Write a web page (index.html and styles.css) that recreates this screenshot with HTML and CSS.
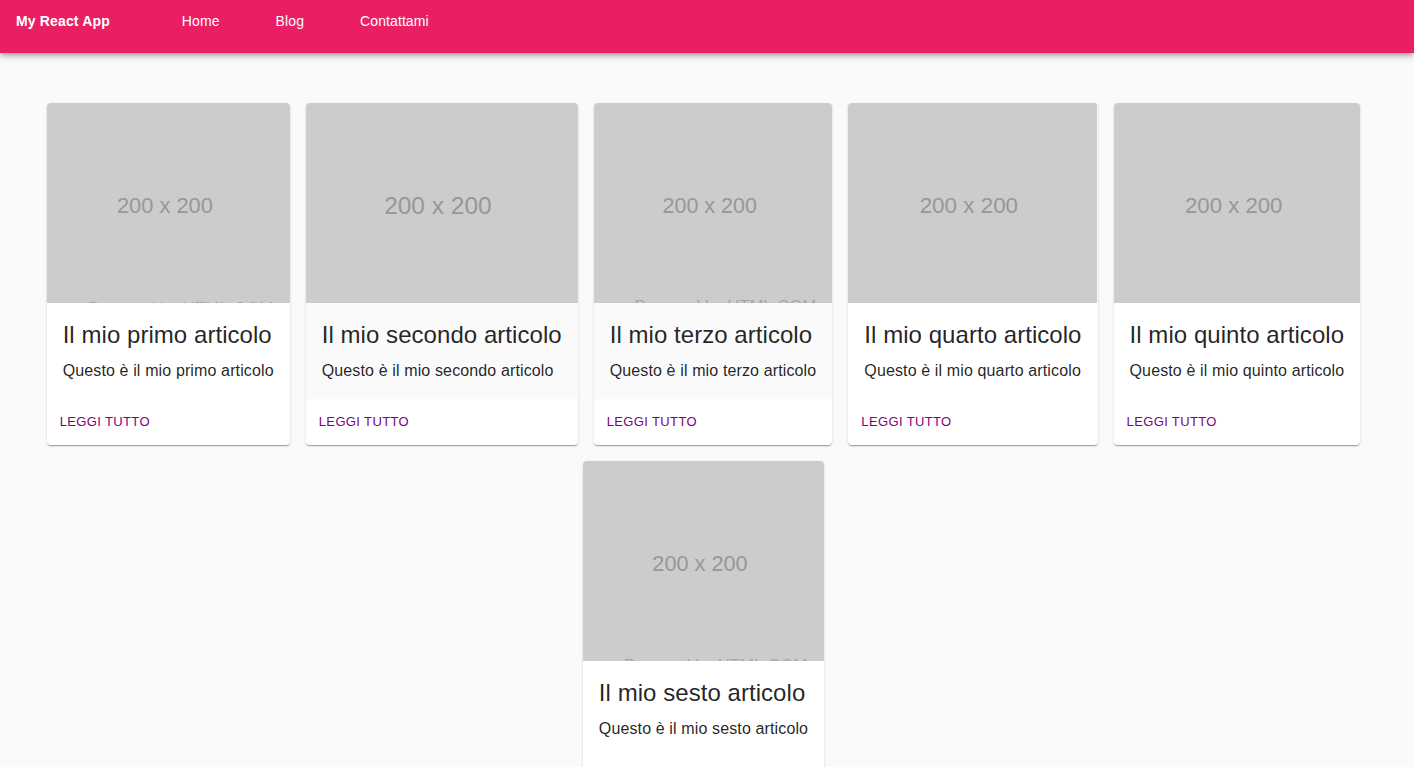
FILE: index.html
```html
<!DOCTYPE html>
<html lang="it">
<head>
<meta charset="utf-8">
<title>My React App</title>
<link rel="stylesheet" href="styles.css">
</head>
<body>
<header class="appbar">
  <div class="brand">My React App</div>
  <nav class="nav">
    <a class="nav-link" href="#">Home</a>
    <a class="nav-link" href="#">Blog</a>
    <a class="nav-link" href="#">Contattami</a>
  </nav>
</header>
<main class="grid">
  <article class="card">
    <div class="action">
      <div class="media"><svg viewBox="0 0 200 200" preserveAspectRatio="xMidYMid slice"><rect width="200" height="200" fill="#cccccc"/><text x="97" y="108" text-anchor="middle" class="ph-main">200 x 200</text><text x="110" y="191" text-anchor="middle" class="ph-sub">Powered by HTML.COM</text></svg></div>
      <div class="content"><h2 class="title">Il mio primo articolo</h2><p class="desc">Questo è il mio primo articolo</p></div>
    </div>
    <div class="actions"><a class="btn" href="#">Leggi tutto</a></div>
  </article>
  <article class="card">
    <div class="action focused">
      <div class="media"><svg viewBox="0 0 200 200" preserveAspectRatio="xMidYMid slice"><rect width="200" height="200" fill="#cccccc"/><text x="97" y="108" text-anchor="middle" class="ph-main">200 x 200</text><text x="110" y="191" text-anchor="middle" class="ph-sub">Powered by HTML.COM</text></svg></div>
      <div class="content"><h2 class="title">Il mio secondo articolo</h2><p class="desc">Questo è il mio secondo articolo</p></div>
    </div>
    <div class="actions"><a class="btn" href="#">Leggi tutto</a></div>
  </article>
  <article class="card">
    <div class="action focused">
      <div class="media"><svg viewBox="0 0 200 200" preserveAspectRatio="xMidYMid slice"><rect width="200" height="200" fill="#cccccc"/><text x="97" y="108" text-anchor="middle" class="ph-main">200 x 200</text><text x="110" y="191" text-anchor="middle" class="ph-sub">Powered by HTML.COM</text></svg></div>
      <div class="content"><h2 class="title">Il mio terzo articolo</h2><p class="desc">Questo è il mio terzo articolo</p></div>
    </div>
    <div class="actions"><a class="btn" href="#">Leggi tutto</a></div>
  </article>
  <article class="card">
    <div class="action">
      <div class="media"><svg viewBox="0 0 200 200" preserveAspectRatio="xMidYMid slice"><rect width="200" height="200" fill="#cccccc"/><text x="97" y="108" text-anchor="middle" class="ph-main">200 x 200</text><text x="110" y="191" text-anchor="middle" class="ph-sub">Powered by HTML.COM</text></svg></div>
      <div class="content"><h2 class="title">Il mio quarto articolo</h2><p class="desc">Questo è il mio quarto articolo</p></div>
    </div>
    <div class="actions"><a class="btn" href="#">Leggi tutto</a></div>
  </article>
  <article class="card">
    <div class="action">
      <div class="media"><svg viewBox="0 0 200 200" preserveAspectRatio="xMidYMid slice"><rect width="200" height="200" fill="#cccccc"/><text x="97" y="108" text-anchor="middle" class="ph-main">200 x 200</text><text x="110" y="191" text-anchor="middle" class="ph-sub">Powered by HTML.COM</text></svg></div>
      <div class="content"><h2 class="title">Il mio quinto articolo</h2><p class="desc">Questo è il mio quinto articolo</p></div>
    </div>
    <div class="actions"><a class="btn" href="#">Leggi tutto</a></div>
  </article>
  <article class="card">
    <div class="action">
      <div class="media"><svg viewBox="0 0 200 200" preserveAspectRatio="xMidYMid slice"><rect width="200" height="200" fill="#cccccc"/><text x="97" y="108" text-anchor="middle" class="ph-main">200 x 200</text><text x="110" y="191" text-anchor="middle" class="ph-sub">Powered by HTML.COM</text></svg></div>
      <div class="content"><h2 class="title">Il mio sesto articolo</h2><p class="desc">Questo è il mio sesto articolo</p></div>
    </div>
    <div class="actions"><a class="btn" href="#">Leggi tutto</a></div>
  </article>
</main>
</body>
</html>
```
FILE: styles.css
```css
html, body {
  margin: 0;
  padding: 0;
}
body {
  background: #fafafa;
  font-family: "Liberation Sans", Arial, Helvetica, sans-serif;
  color: rgba(0, 0, 0, 0.87);
}
.appbar {
  height: 53px;
  background: #e91e63;
  color: #fff;
  display: flex;
  align-items: flex-start;
  padding: 13px 16px 0;
  box-sizing: border-box;
  box-shadow: 0 2px 4px -1px rgba(0,0,0,0.2), 0 4px 5px 0 rgba(0,0,0,0.14), 0 1px 10px 0 rgba(0,0,0,0.12);
  position: relative;
  z-index: 1;
}
.brand {
  font-weight: bold;
  font-size: 14px;
  line-height: 16px;
  letter-spacing: 0.15px;
}
.nav {
  display: flex;
  gap: 56px;
  margin-left: 72px;
}
.nav-link {
  color: #fff;
  text-decoration: none;
  font-size: 14px;
  line-height: 16px;
  letter-spacing: 0.1px;
}
.grid {
  display: flex;
  flex-wrap: wrap;
  justify-content: center;
  align-items: flex-start;
  gap: 16px;
  padding: 50px 7px 0 0;
}
.card {
  background: #fff;
  border-radius: 4px;
  overflow: hidden;
  box-shadow: 0 2px 1px -1px rgba(0,0,0,0.2), 0 1px 1px 0 rgba(0,0,0,0.14), 0 1px 3px 0 rgba(0,0,0,0.12);
}
.action.focused .content {
  background: #fafafa;
}
.media {
  height: 200px;
}
.media svg {
  display: block;
  width: 100%;
  height: 200px;
}
.ph-main {
  font-family: "Liberation Sans", Arial, sans-serif;
  font-size: 18px;
  fill: #979797;
}
.ph-sub {
  font-family: "Liberation Sans", Arial, sans-serif;
  font-size: 14px;
  fill: #a6a6a6;
}
.content {
  padding: 16px;
}
.title {
  margin: 0 0 8px;
  font-size: 24px;
  line-height: 32px;
  font-weight: 400;
  white-space: nowrap;
  letter-spacing: 0.05px;
}
.desc {
  margin: 0;
  font-size: 16px;
  line-height: 24px;
  white-space: nowrap;
  letter-spacing: 0.13px;
}
.actions {
  padding: 8px;
  display: flex;
}
.btn {
  display: inline-block;
  padding: 4px 5px;
  font-size: 13px;
  line-height: 22px;
  letter-spacing: 0.37px;
  text-transform: uppercase;
  text-decoration: none;
  color: #800080;
}
```
